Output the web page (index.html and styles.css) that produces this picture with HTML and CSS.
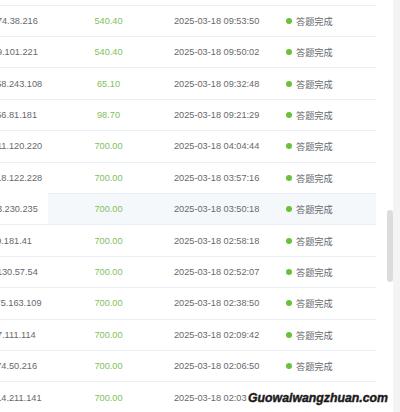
FILE: index.html
```html
<!DOCTYPE html>
<html lang="zh-CN">
<head>
<meta charset="utf-8">
<title>答题记录</title>
<link rel="stylesheet" href="styles.css">
</head>
<body>
<div class="page">
  <div class="table">
    <div class="row"><div class="c ip">61.174.38.216</div><div class="c amt">540.40</div><div class="c time">2025-03-18 09:53:50</div><div class="c st"><i class="dot"></i>答题完成</div></div>
    <div class="row"><div class="c ip">36.59.101.221</div><div class="c amt">540.40</div><div class="c time">2025-03-18 09:50:02</div><div class="c st"><i class="dot"></i>答题完成</div></div>
    <div class="row"><div class="c ip">113.58.243.108</div><div class="c amt">65.10</div><div class="c time">2025-03-18 09:32:48</div><div class="c st"><i class="dot"></i>答题完成</div></div>
    <div class="row"><div class="c ip">113.56.81.181</div><div class="c amt">98.70</div><div class="c time">2025-03-18 09:21:29</div><div class="c st"><i class="dot"></i>答题完成</div></div>
    <div class="row"><div class="c ip">58.211.120.220</div><div class="c amt">700.00</div><div class="c time">2025-03-18 04:04:44</div><div class="c st"><i class="dot"></i>答题完成</div></div>
    <div class="row"><div class="c ip">36.118.122.228</div><div class="c amt">700.00</div><div class="c time">2025-03-18 03:57:16</div><div class="c st"><i class="dot"></i>答题完成</div></div>
    <div class="row hover"><div class="c ip">60.13.230.235</div><div class="c amt">700.00</div><div class="c time">2025-03-18 03:50:18</div><div class="c st"><i class="dot"></i>答题完成</div></div>
    <div class="row"><div class="c ip">117.9.181.41</div><div class="c amt">700.00</div><div class="c time">2025-03-18 02:58:18</div><div class="c st"><i class="dot"></i>答题完成</div></div>
    <div class="row"><div class="c ip">182.130.57.54</div><div class="c amt">700.00</div><div class="c time">2025-03-18 02:52:07</div><div class="c st"><i class="dot"></i>答题完成</div></div>
    <div class="row"><div class="c ip">111.75.163.109</div><div class="c amt">700.00</div><div class="c time">2025-03-18 02:38:50</div><div class="c st"><i class="dot"></i>答题完成</div></div>
    <div class="row"><div class="c ip">39.27.111.114</div><div class="c amt">700.00</div><div class="c time">2025-03-18 02:09:42</div><div class="c st"><i class="dot"></i>答题完成</div></div>
    <div class="row"><div class="c ip">117.74.50.216</div><div class="c amt">700.00</div><div class="c time">2025-03-18 02:06:50</div><div class="c st"><i class="dot"></i>答题完成</div></div>
    <div class="row"><div class="c ip">36.114.211.141</div><div class="c amt">700.00</div><div class="c time">2025-03-18 02:03:11</div><div class="c st"><i class="dot"></i>答题完成</div></div>
  </div>
  <div class="gap"></div>
  <div class="scroll"><div class="thumb"></div></div>
  <div class="strip"></div>
  <div class="watermark">Guowaiwangzhuan.com</div>
</div>
</body>
</html>
```

FILE: styles.css
```css
* { box-sizing: border-box; }
html, body { margin: 0; padding: 0; background: #fff; }
body {
  width: 400px;
  height: 412px;
  overflow: hidden;
  font-family: "Liberation Sans", "Noto Sans CJK SC", sans-serif;
  font-size: 9.2px;
  color: #66686c;
}
.page {
  position: relative;
  display: flex;
  width: 400px;
  height: 412px;
  overflow: hidden;
}
.table {
  width: 376px;
  flex: none;
  padding-top: 4.7px;
  overflow: hidden;
}
.row {
  display: flex;
  height: 31.4px;
  margin-left: -21px;
}
.c {
  height: 31.4px;
  border-top: 1px solid #ebeef5;
  display: flex;
  align-items: center;
  white-space: nowrap;
}
.ip { width: 69px; padding-left: 0; }
.amt { width: 109px; padding-left: 12px; justify-content: center; color: #80c15c; }
.time { width: 112px; padding-left: 17px; }
.st { flex: 1; padding-left: 17px; }
.dot {
  display: inline-block;
  width: 6px;
  height: 6px;
  border-radius: 50%;
  background: #67c23a;
  margin-right: 4px;
}
.row.hover .c { background: #f5f8fb; }
.row.hover .ip { background: #fff; border-top-color: #fff; }
.gap { width: 11px; flex: none; }
.scroll { width: 6px; flex: none; padding-top: 210px; }
.thumb { height: 72px; background: #dcdcdc; border-radius: 3px; }
.strip { flex: 1; background: #f4f4f5; }
.watermark {
  position: absolute;
  left: 247px;
  top: 390px;
  width: 141px;
  height: 17px;
  background: #fff;
  font-family: "Liberation Sans", sans-serif;
  font-weight: bold;
  font-style: italic;
  font-size: 12.3px;
  line-height: 17px;
  color: #1a1a1a;
  -webkit-text-stroke: 0.4px #1a1a1a;
  padding-left: 1px;
}
```
